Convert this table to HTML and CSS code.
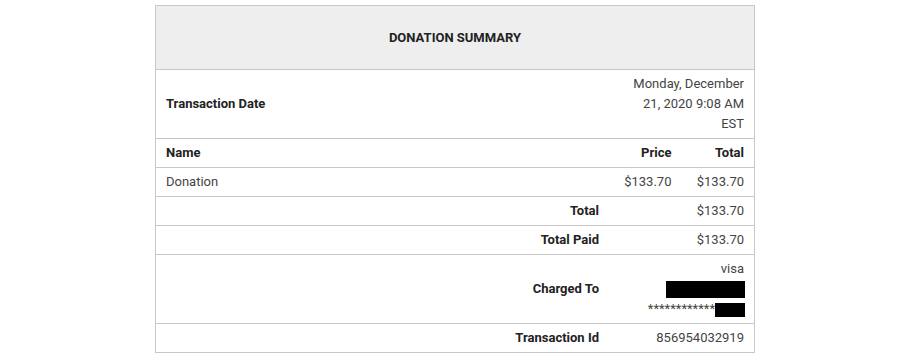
FILE: index.html
```html
<!DOCTYPE html>
<html lang="en">

<head>
  <meta charset="UTF-8">
  <title>Donation Summary</title>
  <link rel="stylesheet" href="styles.css">
</head>

<body>

  <table class="summary">
    <thead>
      <tr>
        <th colspan="3" class="title">DONATION SUMMARY</th>
      </tr>
    </thead>
    <tbody>
      <tr>
        <td class="label">Transaction Date</td>
        <td colspan="2" class="value date">Monday, December 21, 2020 9:08 AM EST</td>
      </tr>
      <tr class="cols">
        <td class="label">Name</td>
        <td class="label num">Price</td>
        <td class="label num">Total</td>
      </tr>
      <tr>
        <td class="value">Donation</td>
        <td class="value num">$133.70</td>
        <td class="value num">$133.70</td>
      </tr>
      <tr>
        <td class="label num">Total</td>
        <td colspan="2" class="value num">$133.70</td>
      </tr>
      <tr>
        <td class="label num">Total Paid</td>
        <td colspan="2" class="value num">$133.70</td>
      </tr>
      <tr>
        <td class="label num">Charged To</td>
        <td colspan="2" class="value num">
          <div>visa</div>
          <div><span class="redact wide"></span></div>
          <div class="card">************<span class="redact short"></span></div>
        </td>
      </tr>
      <tr>
        <td class="label num">Transaction Id</td>
        <td colspan="2" class="value num">856954032919</td>
      </tr>
    </tbody>
  </table>

</body>
</html>
```

FILE: styles.css
```css
body { margin: 0; padding: 5px 0; background: #fff; font-family: Roboto, "Liberation Sans", sans-serif; font-size: 13px; }
.summary { width: 600px; margin: 0 auto; border-collapse: collapse; border: 1px solid #c8c8c8; }
.summary td, .summary th { border-bottom: 1px solid #c8c8c8; padding: 4px 10px; line-height: 20px; vertical-align: middle; }
.summary td:first-child { width: 433px; }
.title { background: #eeeeee; padding: 22px 10px 21px !important; font-weight: bold; color: #222; text-align: center; }
.label { font-weight: bold; color: #222; }
.value { color: #444; }
.num { text-align: right; white-space: nowrap; }
.date { width: 126px; text-align: right; }
.redact { display: inline-block; background: #000; vertical-align: middle; }
.redact.wide { width: 79px; height: 17px; margin-right: -1px; }
.redact.short { width: 30px; height: 14px; margin-right: -1px; }
.card { letter-spacing: 0; }
```
